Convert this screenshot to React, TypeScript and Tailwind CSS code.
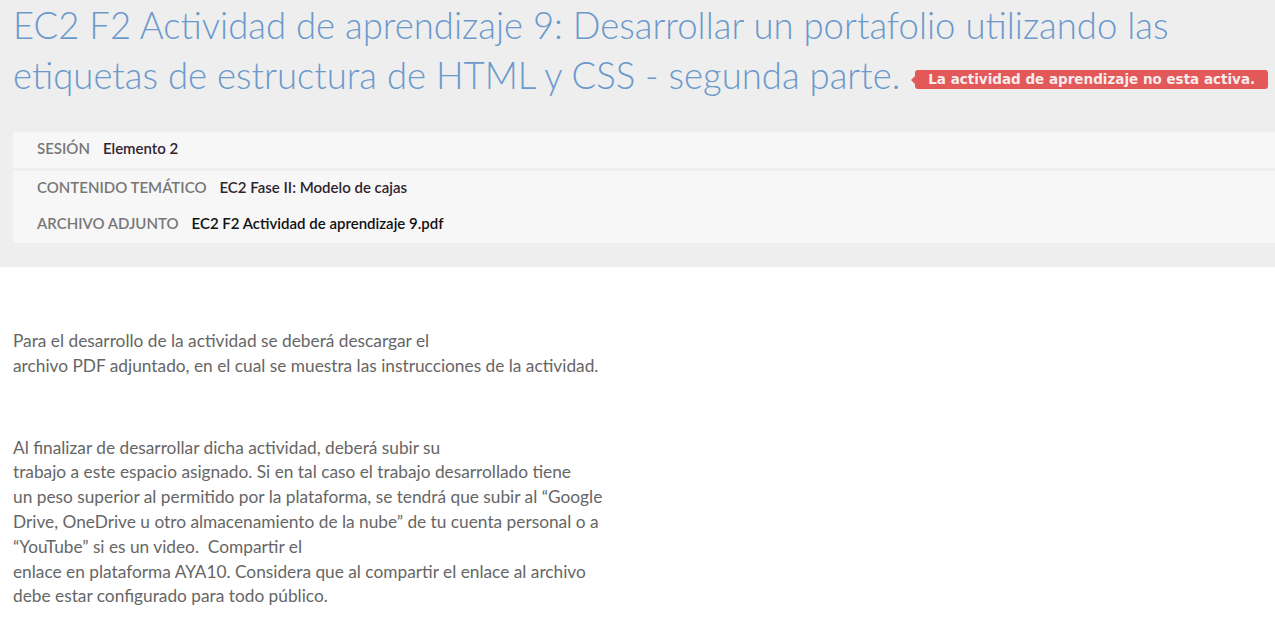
const meta = [
  { label: "CONTENIDO TEMÁTICO", value: "EC2 Fase II: Modelo de cajas", dark: false },
  { label: "ARCHIVO ADJUNTO", value: "EC2 F2 Actividad de aprendizaje 9.pdf", dark: true },
];

export default function App() {
  return (
    <div className="min-h-screen bg-white font-['Lato','Noto_Sans',sans-serif]">
      <div className="bg-[#eeeeee] pl-[13px] pb-[24px]">
        <h1 className="text-[36.5px] font-light leading-[50px] text-[#6b99cc]">
          EC2 F2 Actividad de aprendizaje 9: Desarrollar un portafolio utilizando las
          <br />
          <span className="whitespace-nowrap">
            etiquetas de estructura de HTML y CSS - segunda parte.
            <span className="relative ml-[15px] inline-block align-[5px] rounded-[3px] bg-[#e35858] px-[13px] py-[1px] font-['DejaVu_Sans',sans-serif] text-[13.5px] font-bold leading-[17px] text-[#f7ecec]">
              <span className="absolute left-[-4px] top-1/2 -translate-y-1/2 border-y-[4px] border-r-[4px] border-y-transparent border-r-[#e35858]" />
              La actividad de aprendizaje no esta activa.
            </span>
          </span>
        </h1>

        <div className="mt-[32px] flex h-[36px] items-center bg-[#f7f7f7] pb-[4px] pl-[24px] text-[15px]">
          <span className="font-semibold text-[#777777]">SESIÓN</span>
          <span className="ml-[13px] font-semibold text-[#2f2430]">Elemento 2</span>
        </div>
        <div className="mt-[3px] flex flex-col gap-[4px] bg-[#f7f7f7] pb-[4px] pl-[24px] text-[15px]">
          {meta.map((m) => (
            <div key={m.label} className="flex h-[32px] items-center">
              <span className="font-semibold text-[#777777]">{m.label}</span>
              <span
                className={
                  m.dark
                    ? "ml-[13px] font-semibold text-[#111111]"
                    : "ml-[13px] font-semibold text-[#2f2430]"
                }
              >
                {m.value}
              </span>
            </div>
          ))}
        </div>
      </div>

      <div className="pl-[13px] pt-[62px] text-[17.3px] leading-[24.8px] text-[#666666]">
        <p>
          Para el desarrollo de la actividad se deberá descargar el
          <br />
          archivo PDF adjuntado, en el cual se muestra las instrucciones de la actividad.
        </p>
        <p className="mt-[57px]">
          Al finalizar de desarrollar dicha actividad, deberá subir su
          <br />
          trabajo a este espacio asignado. Si en tal caso el trabajo desarrollado tiene
          <br />
          un peso superior al permitido por la plataforma, se tendrá que subir al “Google
          <br />
          Drive, OneDrive u otro almacenamiento de la nube” de tu cuenta personal o a
          <br />
          “YouTube” si es un video.&nbsp; Compartir el
          <br />
          enlace en plataforma AYA10. Considera que al compartir el enlace al archivo
          <br />
          debe estar configurado para todo público.
        </p>
      </div>
    </div>
  );
}
